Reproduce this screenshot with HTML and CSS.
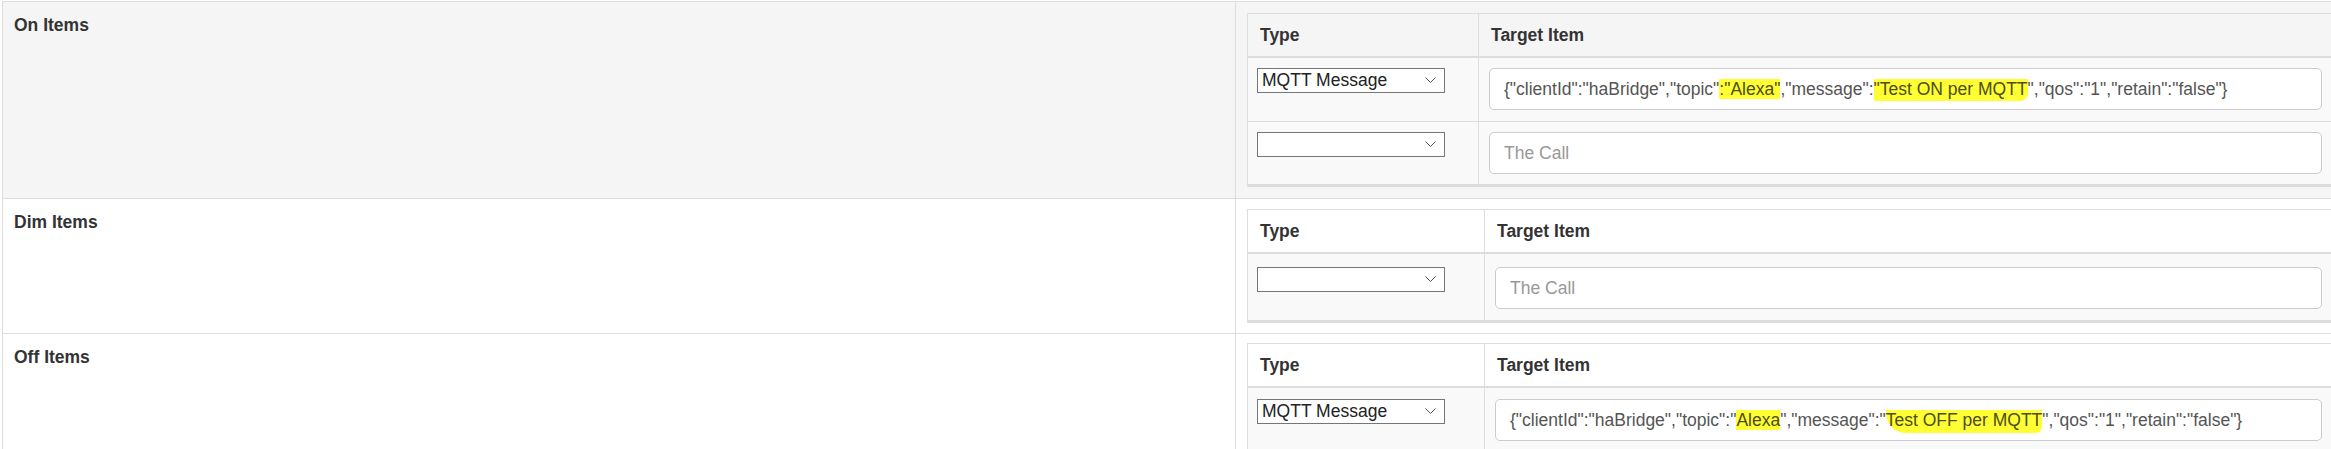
FILE: index.html
```html
<!DOCTYPE html>
<html lang="en">
<head>
<meta charset="utf-8">
<title>Items</title>
<link rel="stylesheet" href="styles.css">
</head>
<body>
<div class="outer">
  <div class="row row-on">
    <div class="label">On Items</div>
    <div class="items items-on">
      <div class="inner inner-on">
        <div class="th th-type">Type</div>
        <div class="th th-target">Target Item</div>
        <div class="td td-type td-first">
          <div class="select"><span class="select-text">MQTT Message</span><svg class="chev" width="11" height="7" viewBox="0 0 11 7"><path d="M0.5 0.5 L5.5 5.5 L10.5 0.5" fill="none" stroke="#555" stroke-width="1"/></svg></div>
        </div>
        <div class="td td-target td-first">
          <div class="input">{"clientId":"haBridge","topic"<span class="hl">:"Alexa"</span>,"message":<span class="hl hl-curve">"Test ON per MQTT</span>","qos":"1","retain":"false"}</div>
        </div>
        <div class="td td-type">
          <div class="select"><span class="select-text"></span><svg class="chev" width="11" height="7" viewBox="0 0 11 7"><path d="M0.5 0.5 L5.5 5.5 L10.5 0.5" fill="none" stroke="#555" stroke-width="1"/></svg></div>
        </div>
        <div class="td td-target">
          <div class="input placeholder">The Call</div>
        </div>
      </div>
    </div>
  </div>
  <div class="row">
    <div class="label">Dim Items</div>
    <div class="items items-dim">
      <div class="inner inner-wide">
        <div class="th th-type">Type</div>
        <div class="th th-target">Target Item</div>
        <div class="td td-type td-dim">
          <div class="select"><span class="select-text"></span><svg class="chev" width="11" height="7" viewBox="0 0 11 7"><path d="M0.5 0.5 L5.5 5.5 L10.5 0.5" fill="none" stroke="#555" stroke-width="1"/></svg></div>
        </div>
        <div class="td td-target td-dim">
          <div class="input placeholder">The Call</div>
        </div>
      </div>
    </div>
  </div>
  <div class="row">
    <div class="label">Off Items</div>
    <div class="items items-off">
      <div class="inner inner-wide">
        <div class="th th-type">Type</div>
        <div class="th th-target">Target Item</div>
        <div class="td td-type td-off">
          <div class="select"><span class="select-text">MQTT Message</span><svg class="chev" width="11" height="7" viewBox="0 0 11 7"><path d="M0.5 0.5 L5.5 5.5 L10.5 0.5" fill="none" stroke="#555" stroke-width="1"/></svg></div>
        </div>
        <div class="td td-target td-off">
          <div class="input">{"clientId":"haBridge","topic":"<span class="hl">Alexa</span>","message":"<span class="hl hl-swoosh">Test OFF per MQTT</span>","qos":"1","retain":"false"}</div>
        </div>
      </div>
    </div>
  </div>
</div>
</body>
</html>
```

FILE: styles.css
```css
html, body {
  margin: 0;
  padding: 0;
  background: #fff;
  overflow: hidden;
}
body {
  padding: 1px 0 0 2px;
  font-family: "Liberation Sans", Arial, sans-serif;
  font-size: 17.5px;
  color: #333;
}
.outer {
  width: 2500px;
  border-top: 1px solid #ddd;
  border-left: 1px solid #ddd;
}
.row {
  display: grid;
  grid-template-columns: 1233px 1fr;
  border-bottom: 1px solid #ddd;
  background: #fff;
}
.row-on {
  background: #f5f5f5;
}
.label {
  border-right: 1px solid #ddd;
  padding: 10px 11px;
  font-weight: bold;
  line-height: 26px;
}
.items {
  padding: 10px 0 10px 11px;
}
.items-on {
  padding-top: 11px;
  padding-bottom: 11px;
}
.items-off {
  padding-top: 9px;
}
.inner {
  width: 1085px;
  display: grid;
  grid-template-columns: 231px 1fr;
  border-top: 1px solid #ddd;
  border-left: 1px solid #ddd;
  border-bottom: 3px solid #ddd;
}
.inner-wide {
  grid-template-columns: 237px 1fr;
}
.th {
  padding: 10px 12px;
  line-height: 22px;
  font-weight: bold;
  border-right: 1px solid #ddd;
  border-bottom: 2px solid #ddd;
}
.td {
  padding: 10px;
  border-right: 1px solid #ddd;
  border-bottom: 1px solid #ddd;
  background: #f9f9f9;
}
.td:nth-last-child(-n+2) {
  border-bottom: none;
}
.td-first {
  padding-bottom: 11px;
}
.td-dim {
  padding-top: 13px;
  padding-bottom: 11px;
}
.td-off {
  padding-top: 11px;
}
.td-type {
  padding-left: 9px;
}
.select {
  width: 188px;
  height: 25px;
  box-sizing: border-box;
  border: 1px solid #767676;
  background: #fff;
  color: #222;
  display: flex;
  align-items: center;
  justify-content: space-between;
  padding: 0 8px 0 4px;
  line-height: 23px;
}
.chev {
  display: block;
}
.input {
  height: 42px;
  box-sizing: border-box;
  border: 1px solid #ccc;
  border-radius: 5px;
  background: #fff;
  color: #555;
  padding: 0 14px;
  line-height: 40px;
  white-space: nowrap;
  overflow: hidden;
}
.placeholder {
  color: #999;
}
.hl {
  background: #ffff33;
  color: #4d4d1a;
}
.hl-curve {
  border-radius: 0 0 8px 0;
  padding-bottom: 2px;
}
.hl-swoosh {
  border-radius: 0 0 6px 20px;
  padding-bottom: 3px;
}
```
